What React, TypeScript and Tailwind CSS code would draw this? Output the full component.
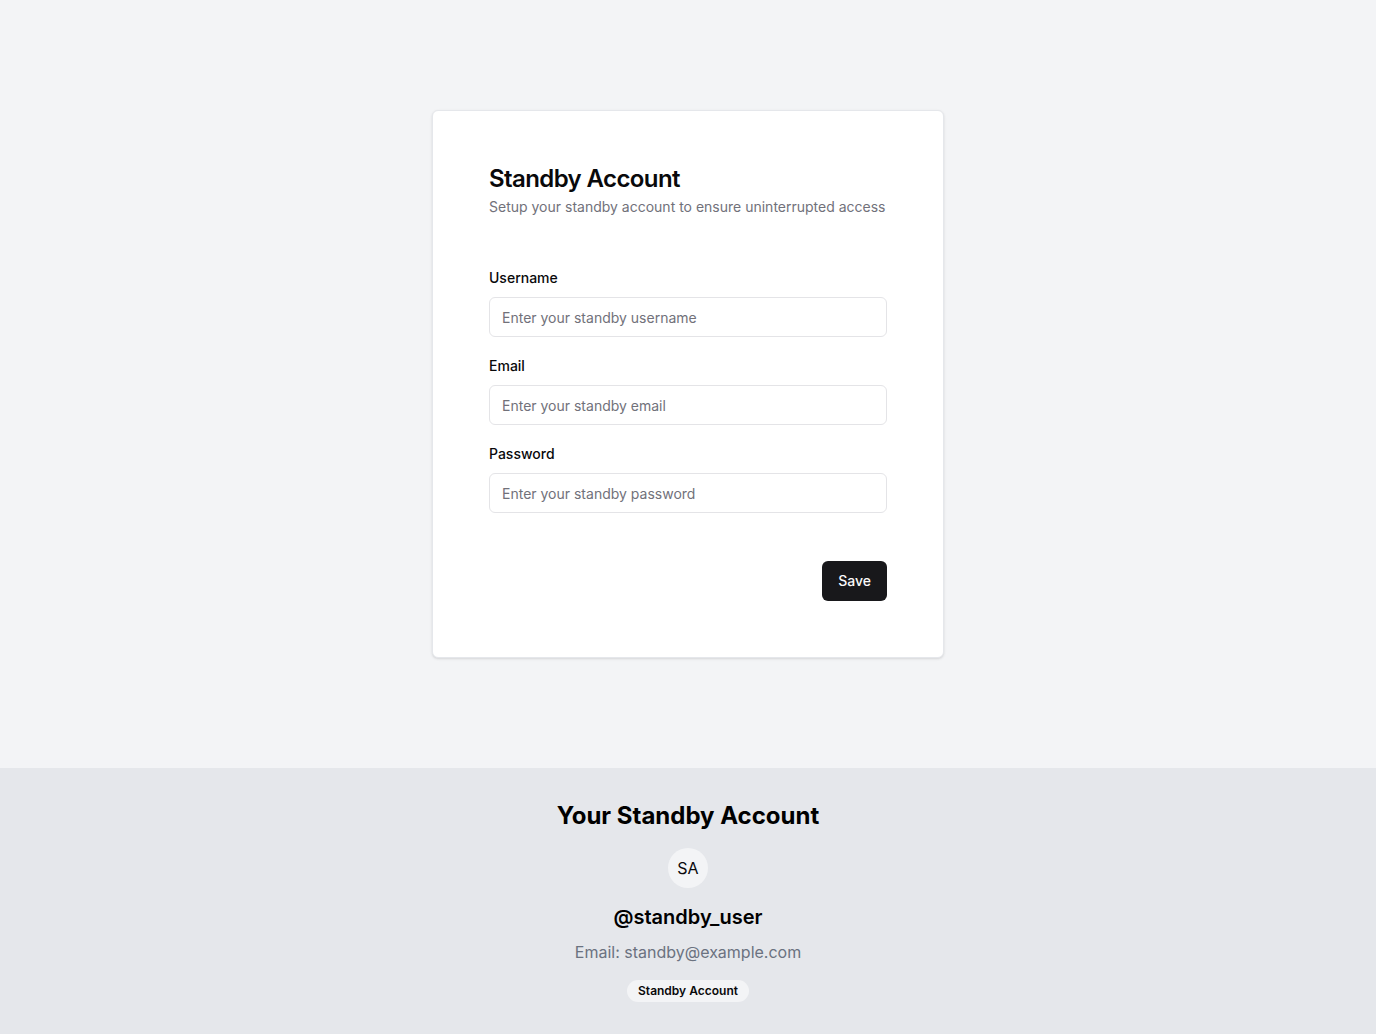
import React from "react";

function Field({ label, placeholder, type }: { label: string; placeholder: string; type: string }) {
  return (
    <div className="flex flex-col">
      <label className="text-sm leading-5 font-medium text-[#09090b]">{label}</label>
      <input
        type={type}
        placeholder={placeholder}
        className="mt-[9px] h-10 w-full rounded-md border border-[#e4e4e7] bg-white px-3 text-sm text-[#09090b] placeholder:text-[#71717a] outline-none"
      />
    </div>
  );
}

export default function App() {
  return (
    <div className="min-h-screen flex flex-col bg-[#f3f4f6] font-['Inter',sans-serif]">
      {/* Form card */}
      <main className="flex-1 flex items-center justify-center">
        <div className="w-[512px] rounded-md border border-[#e5e7eb] bg-white p-8 shadow-sm">
          <div className="p-6 flex flex-col gap-1.5">
            <h1 className="text-2xl leading-none font-semibold tracking-tight text-[#09090b]">
              Standby Account
            </h1>
            <p className="text-sm leading-5 whitespace-nowrap text-[#71717a]">
              Setup your standby account to ensure uninterrupted access
            </p>
          </div>
          <div className="px-6 pb-6 pt-[27px]">
            <div className="flex flex-col gap-[19px]">
              <Field label="Username" placeholder="Enter your standby username" type="text" />
              <Field label="Email" placeholder="Enter your standby email" type="email" />
              <Field label="Password" placeholder="Enter your standby password" type="password" />
            </div>
            <div className="mt-12 flex justify-end">
              <button className="h-10 rounded-md bg-[#18181b] px-4 text-sm font-medium text-[#fafafa]">
                Save
              </button>
            </div>
          </div>
        </div>
      </main>

      {/* Summary */}
      <footer className="h-[266px] bg-[#e5e7eb] pt-8 flex flex-col items-center">
        <h2 className="text-2xl leading-8 font-bold text-black">Your Standby Account</h2>
        <div className="mt-4 flex h-10 w-10 items-center justify-center rounded-full bg-[#f3f4f6] text-base text-[#09090b]">
          SA
        </div>
        <div className="mt-[15px] text-xl leading-7 font-semibold text-black">@standby_user</div>
        <div className="mt-[9px] text-base leading-6 text-[#6b7280]">Email: standby@example.com</div>
        <span className="mt-4 rounded-full bg-[#f3f4f6] px-[11px] py-[3px] text-xs leading-4 font-semibold text-[#09090b]">
          Standby Account
        </span>
      </footer>
    </div>
  );
}
